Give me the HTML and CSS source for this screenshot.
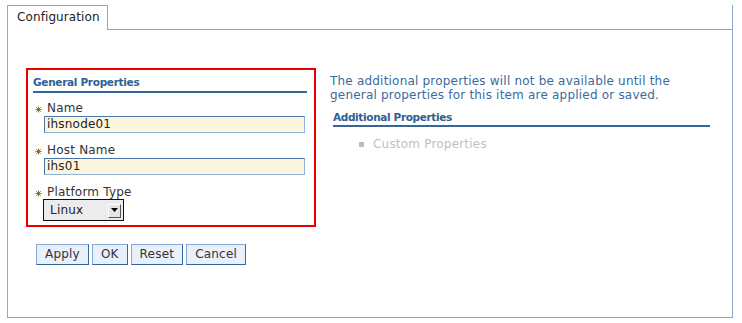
FILE: index.html
```html
<!DOCTYPE html>
<html lang="en">
<head>
    <meta charset="UTF-8">
    <meta name="viewport" content="width=device-width, initial-scale=1.0">
    <title>Configuration</title>
    <link rel="stylesheet" href="styles.css">
</head>
<body>
    <div class="tabs">
        <div class="tab">Configuration</div>
        <div class="tab-rest"></div>
    </div>
    <div class="panel">
        <div class="left">
            <div class="general">
                <h2 class="section-title first">General Properties</h2>
                <div class="field">
                    <label class="field-label"><svg class="req" width="7" height="7" viewBox="0 0 7 7"><path d="M3.5 0.5V6.5M0.5 3.5H6.5M1.3 1.3L5.7 5.7M5.7 1.3L1.3 5.7" stroke="#8a7a10" stroke-width="1"/></svg>Name</label>
                    <input class="text-input" type="text" value="ihsnode01">
                </div>
                <div class="field">
                    <label class="field-label"><svg class="req" width="7" height="7" viewBox="0 0 7 7"><path d="M3.5 0.5V6.5M0.5 3.5H6.5M1.3 1.3L5.7 5.7M5.7 1.3L1.3 5.7" stroke="#8a7a10" stroke-width="1"/></svg>Host Name</label>
                    <input class="text-input" type="text" value="ihs01">
                </div>
                <div class="field">
                    <label class="field-label"><svg class="req" width="7" height="7" viewBox="0 0 7 7"><path d="M3.5 0.5V6.5M0.5 3.5H6.5M1.3 1.3L5.7 5.7M5.7 1.3L1.3 5.7" stroke="#8a7a10" stroke-width="1"/></svg>Platform Type</label>
                    <div class="select">
                        <span class="select-value">Linux</span>
                        <span class="select-arrow"><svg width="7" height="5" viewBox="0 0 7 5"><path d="M0 0H7L3.5 4Z" fill="#000"/></svg></span>
                    </div>
                </div>
            </div>
            <div class="buttons">
                <button class="btn">Apply</button>
                <button class="btn">OK</button>
                <button class="btn">Reset</button>
                <button class="btn">Cancel</button>
            </div>
        </div>
        <div class="right">
            <p class="notice">The additional properties will not be available until the<br>general properties for this item are applied or saved.</p>
            <h2 class="section-title second">Additional Properties</h2>
            <ul class="links">
                <li>Custom Properties</li>
            </ul>
        </div>
    </div>
</body>
</html>
```

FILE: styles.css
```css
body { font-family: "DejaVu Sans", Verdana, sans-serif; font-size: 12px; letter-spacing: 0.2px; margin: 0; padding: 0; background-color: #fff; color: #333; }
.tabs { display: flex; margin: 5px 0 0 7px; width: 726px; height: 25px; }
.tab { box-sizing: border-box; width: 101px; height: 25px; border: 1px solid #8ea8d6; border-bottom: none; padding: 4px 0 0 9px; line-height: 14px; letter-spacing: 0.1px; color: #222; background-color: #fff; }
.tab-rest { flex: 1; border-bottom: 1px solid #8ea8d6; border-right: 1px solid #8ea8d6; }
.panel { box-sizing: border-box; display: flex; margin-left: 7px; width: 726px; height: 288px; border: 1px solid #8ea8d6; border-top: none; padding: 38px 0 0 18px; }
.left { width: 290px; }
.general { box-sizing: border-box; width: 290px; height: 159px; border: 2px solid #ee0000; padding: 6px 7px 0 5px; }
.section-title { margin: 0; font-size: 10.5px; font-weight: bold; letter-spacing: -0.3px; line-height: 13px; color: #2f6094; border-bottom: 2px solid #336699; }
.section-title.first { padding-bottom: 2px; }
.section-title.second { padding-bottom: 1px; margin: 9px 0 0 3px; width: 377px; letter-spacing: -0.35px; }
.field { margin-top: 10px; }
.field:first-of-type { margin-top: 8px; }
.field-label { display: flex; align-items: center; line-height: 14px; color: #333; }
.req { margin: 3px 5px 0 2px; }
.text-input { box-sizing: border-box; display: block; margin: 1px 0 0 11px; width: 261px; height: 17px; padding: 0 2px 2px 2px; font-family: "DejaVu Sans", Verdana, sans-serif; font-size: 12px; letter-spacing: 0.2px; color: #222; background-color: #fdf6de; border: 1px solid; border-color: #4a77a8 #8fb3da #8fb3da #4a77a8; outline: none; }
.select { box-sizing: border-box; display: flex; align-items: center; margin: 0 0 0 10px; width: 81px; height: 22px; border: 1px solid #111; background-color: #ececec; }
.select-value { flex: 1; padding-left: 6px; line-height: 20px; color: #222; }
.select-arrow { box-sizing: border-box; display: flex; align-items: center; justify-content: center; width: 13px; height: 14px; margin: 1px 2px 0 0; background-color: #e4e4e4; border: 1px solid; border-color: #fff #555 #555 #fff; }
.buttons { display: flex; gap: 3px; margin: 17px 0 0 10px; }
.btn { box-sizing: border-box; height: 21px; padding: 0 8px; font-family: "DejaVu Sans", Verdana, sans-serif; font-size: 12px; letter-spacing: 0.2px; line-height: 19px; color: #333; background-color: #e8f0fb; border: 1px solid; border-color: #86aad4 #336699 #336699 #86aad4; }
.right { margin-left: 14px; padding-top: 6px; }
.notice { margin: 0; line-height: 14px; color: #3b6a9b; }
.links { list-style: none; margin: 10px 0 0 29px; padding: 0; }
.links li { display: flex; align-items: center; line-height: 14px; color: #c0c0c0; }
.links li::before { content: ""; width: 5px; height: 5px; margin: 1px 9px 0 0; background-color: #bbb; }
```
